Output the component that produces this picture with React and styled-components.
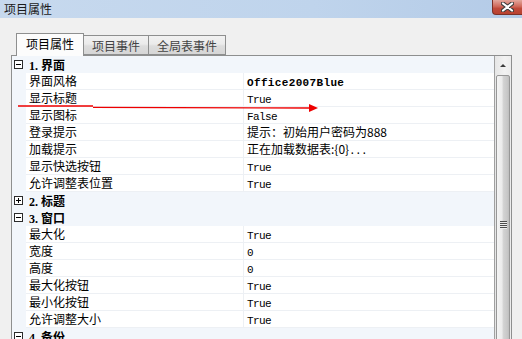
import React from 'react';
import styled, { createGlobalStyle } from 'styled-components';

// * --------- DATA --------- *
const sections = [
    {
        title: '1. 界面',
        open: true,
        rows: [
            { name: '界面风格', value: 'Office2007Blue', kind: 'bold' },
            { name: '显示标题', value: 'True' },
            { name: '显示图标', value: 'False' },
            { name: '登录提示', value: '提示：初始用户密码为888', kind: 'cjk' },
            { name: '加载提示', value: '正在加载数据表:{0}', tail: '...', kind: 'cjk' },
            { name: '显示快选按钮', value: 'True' },
            { name: '允许调整表位置', value: 'True' },
        ],
    },
    { title: '2. 标题', open: false, rows: [] },
    {
        title: '3. 窗口',
        open: true,
        rows: [
            { name: '最大化', value: 'True' },
            { name: '宽度', value: '0' },
            { name: '高度', value: '0' },
            { name: '最大化按钮', value: 'True' },
            { name: '最小化按钮', value: 'True' },
            { name: '允许调整大小', value: 'True' },
        ],
    },
    {
        title: '4. 备份',
        open: true,
        rows: [
            { name: '备份路径', value: '' },
        ],
    },
];

const tabs = ['项目属性', '项目事件', '全局表事件'];

// * ---------- STYLE ---------- *
const GlobalStyle = createGlobalStyle`
    html, body {
        margin: 0;
        padding: 0;
        overflow: hidden;
        background: #f0f0f0;
    }
`;

const cjk = `"Noto Sans CJK SC", "Liberation Sans", sans-serif`;

const Window = styled.div`
    position: relative;
    width: 522px;
    height: 339px;
    overflow: hidden;
    display: flex;
    flex-direction: column;
    background: #f0f0f0;
    font-family: ${cjk};
    font-size: 12px;
    color: #000;
`;

const TitleBar = styled.div`
    height: 18px;
    flex-shrink: 0;
    display: flex;
    align-items: flex-start;
    background: linear-gradient(to right, #c7d9ee 0%, #bfd4ec 60%, #b4cbe7 100%);
`;

const Title = styled.span`
    padding-left: 4px;
    line-height: 18px;
    color: #1a1a1a;
`;

const CloseButton = styled.div`
    margin-left: auto;
    width: 29px;
    height: 14px;
    display: flex;
    align-items: center;
    justify-content: center;
    border: 1px solid #7c3027;
    border-top: none;
    border-right: none;
    border-radius: 0 0 0 4px;
    background: linear-gradient(to bottom, #e3a79d 0%, #d06a5c 45%, #c04a3b 60%, #b8412f 100%);
`;

const Body = styled.div`
    flex: 1;
    display: flex;
    flex-direction: column;
    padding: 15px 10px 0 11px;
    min-height: 0;
`;

const TabRow = styled.div`
    display: flex;
    align-items: flex-end;
    padding-left: 5px;
    margin-bottom: -1px;
    position: relative;
    z-index: 1;
`;

const Tab = styled.div`
    box-sizing: border-box;
    padding: ${p => (p.active ? '0 9px' : '0 8px')};
    height: ${p => (p.active ? '23px' : '20px')};
    line-height: ${p => (p.active ? '20px' : '19px')};
    margin-bottom: ${p => (p.active ? '0' : '1px')};
    border: 1px solid #8e8f8f;
    border-bottom: ${p => (p.active ? 'none' : '1px solid #8e8f8f')};
    margin-left: ${p => (p.first ? '0' : '-1px')};
    background: ${p => (p.active ? '#fcfcfc' : 'linear-gradient(to bottom, #f2f2f2 0%, #ebebeb 45%, #dddddd 55%, #d6d6d6 100%)')};
    color: ${p => (p.active ? '#000' : '#444')};
    position: relative;
    z-index: ${p => (p.active ? 2 : 1)};
`;

const Panel = styled.div`
    flex: 1;
    display: flex;
    min-height: 0;
    border: 1px solid #8e8f8f;
    border-bottom: none;
    background: #fff;
    overflow: hidden;
`;

const Grid = styled.div`
    flex: 1;
    display: flex;
    flex-direction: column;
    overflow: hidden;
`;

const CategoryRow = styled.div`
    height: 17px;
    flex-shrink: 0;
    display: flex;
    align-items: center;
    background: #f2f6fb;
    font-family: "Liberation Serif", "Noto Sans CJK SC", serif;
    font-weight: bold;
    font-size: 12px;
`;

const Expander = styled.span`
    position: relative;
    box-sizing: border-box;
    width: 9px;
    height: 9px;
    margin: 0 6px 0 2px;
    border: 1px solid #2b2b2b;
    background: #fff;
    &::before {
        content: '';
        position: absolute;
        left: 1px;
        top: 3px;
        width: 5px;
        height: 1px;
        background: #000;
    }
    &::after {
        content: '';
        display: ${p => (p.open ? 'none' : 'block')};
        position: absolute;
        left: 3px;
        top: 1px;
        width: 1px;
        height: 5px;
        background: #000;
    }
`;

const PropRow = styled.div`
    height: 17px;
    flex-shrink: 0;
    display: grid;
    grid-template-columns: 14px 218px 1fr;
`;

const Gutter = styled.div`
    background: #f2f6fb;
`;

const Cell = styled.div`
    box-sizing: border-box;
    padding-left: 3px;
    line-height: 16px;
    white-space: nowrap;
    overflow: hidden;
    border-bottom: 1px solid #edf0f4;
    border-right: ${p => (p.name ? '1px solid #edf0f4' : 'none')};
`;

const Mono = styled.span`
    font-family: "Liberation Mono", "Noto Sans CJK SC", monospace;
    font-size: 11px;
    letter-spacing: ${p => (p.bold ? '0.35px' : '-0.6px')};
    font-weight: ${p => (p.bold ? 'bold' : 'normal')};
`;

const ScrollTrack = styled.div`
    width: 16px;
    flex-shrink: 0;
    display: flex;
    flex-direction: column;
    align-items: center;
    border-left: 1px solid #a0a0a0;
    background: linear-gradient(to right, #e6e6e6, #f2f2f2 60%, #ececec);
    overflow: hidden;
`;

const UpButton = styled.div`
    height: 19px;
    flex-shrink: 0;
    display: flex;
    align-items: center;
    justify-content: center;
    &::before {
        content: '';
        border-left: 3px solid transparent;
        border-right: 3px solid transparent;
        border-bottom: 3px solid #3c3c3c;
    }
`;

const Thumb = styled.div`
    box-sizing: border-box;
    width: 14px;
    height: 300px;
    flex-shrink: 0;
    display: flex;
    align-items: center;
    justify-content: center;
    border: 1px solid #979797;
    border-radius: 2px;
    background: linear-gradient(to right, #f4f4f4 0%, #ececec 40%, #d2d2d2 55%, #c8c8c8 85%, #bdbdbd 100%);
`;

const Grip = styled.div`
    width: 7px;
    height: 8px;
    background: repeating-linear-gradient(to bottom, #4d4d4d 0 1px, #eeeeee 1px 2px);
`;

const Annotation = styled.svg`
    position: absolute;
    left: 0;
    top: 0;
    pointer-events: none;
    z-index: 5;
`;

// * ---------- COMPONENTS ---------- *
const Value = ({ value, kind, tail }) => {
    if (kind === 'cjk') return <span>{value}{tail && <Mono>{tail}</Mono>}</span>;
    return <Mono bold={kind === 'bold'}>{value}</Mono>;
};

const Section = ({ section }) => (
    <>
        <CategoryRow>
            <Expander open={section.open} />
            {section.title}
        </CategoryRow>
        {section.open && section.rows.map(row => (
            <PropRow key={row.name}>
                <Gutter />
                <Cell name>{row.name}</Cell>
                <Cell><Value value={row.value} kind={row.kind} tail={row.tail} /></Cell>
            </PropRow>
        ))}
    </>
);

const App = () => {
    return (
        <Window>
            <GlobalStyle />
            <TitleBar>
                <Title>项目属性</Title>
                <CloseButton>
                    <svg width="13" height="10" viewBox="0 0 13 10">
                        <path d="M2 1.5 L11 8.5 M11 1.5 L2 8.5" stroke="#3d3d3d" strokeWidth="4.2" strokeLinecap="round" />
                        <path d="M2 1.5 L11 8.5 M11 1.5 L2 8.5" stroke="#ffffff" strokeWidth="2.2" strokeLinecap="round" />
                    </svg>
                </CloseButton>
            </TitleBar>
            <Body>
                <TabRow>
                    {tabs.map((t, i) => (
                        <Tab key={t} active={i === 0} first={i === 0}>{t}</Tab>
                    ))}
                </TabRow>
                <Panel>
                    <Grid>
                        {sections.map(s => <Section key={s.title} section={s} />)}
                    </Grid>
                    <ScrollTrack>
                        <UpButton />
                        <Thumb><Grip /></Thumb>
                    </ScrollTrack>
                </Panel>
            </Body>
            {/* red annotation arrow drawn over the grid */}
            <Annotation width="522" height="339">
                <path d="M18 106 L93 106 M93 107.3 L310 108" stroke="#ee0000" strokeWidth="1.3" fill="none" />
                <polygon points="309,104 318,108 309,112" fill="#ee0000" />
            </Annotation>
        </Window>
    );
};

export default App;
